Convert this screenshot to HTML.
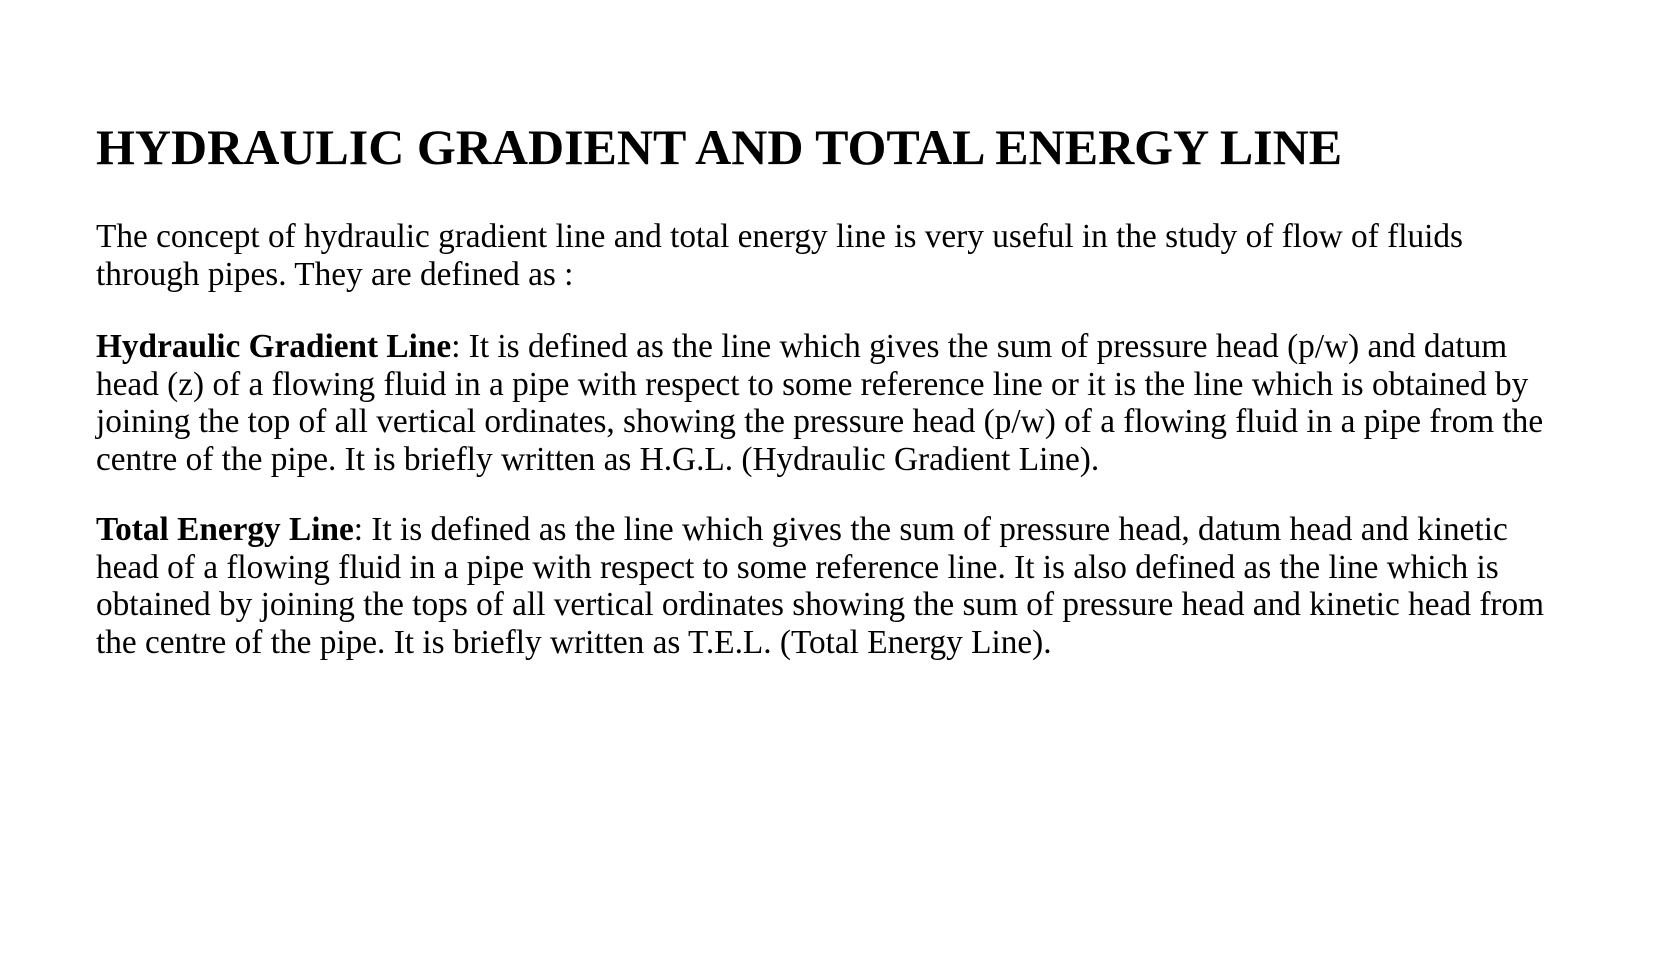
<!DOCTYPE html>
<html><head><meta charset="utf-8"><style>
html,body{margin:0;padding:0;background:#fff;width:1653px;height:977px;overflow:hidden}
body{font-family:"Liberation Serif",serif;color:#000;position:relative}
.t{position:absolute;left:96px;top:122px;font-size:50px;line-height:50px;font-weight:bold;white-space:nowrap}
.p{position:absolute;left:96px;font-size:33.3px;line-height:37.6px;white-space:nowrap}
</style></head><body>
<div class="t">HYDRAULIC GRADIENT AND TOTAL ENERGY LINE</div>
<div class="p" style="top:218px">The concept of hydraulic gradient line and total energy line is very useful in the study of flow of fluids<br>through pipes. They are defined as :</div>
<div class="p" style="top:328px"><b>Hydraulic Gradient Line</b>: It is defined as the line which gives the sum of pressure head (p/w) and datum<br>head (z) of a flowing fluid in a pipe with respect to some reference line or it is the line which is obtained by<br>joining the top of all vertical ordinates, showing the pressure head (p/w) of a flowing fluid in a pipe from the<br>centre of the pipe. It is briefly written as H.G.L. (Hydraulic Gradient Line).</div>
<div class="p" style="top:511px"><b>Total Energy Line</b>: It is defined as the line which gives the sum of pressure head, datum head and kinetic<br>head of a flowing fluid in a pipe with respect to some reference line. It is also defined as the line which is<br>obtained by joining the tops of all vertical ordinates showing the sum of pressure head and kinetic head from<br>the centre of the pipe. It is briefly written as T.E.L. (Total Energy Line).</div>
</body></html>
